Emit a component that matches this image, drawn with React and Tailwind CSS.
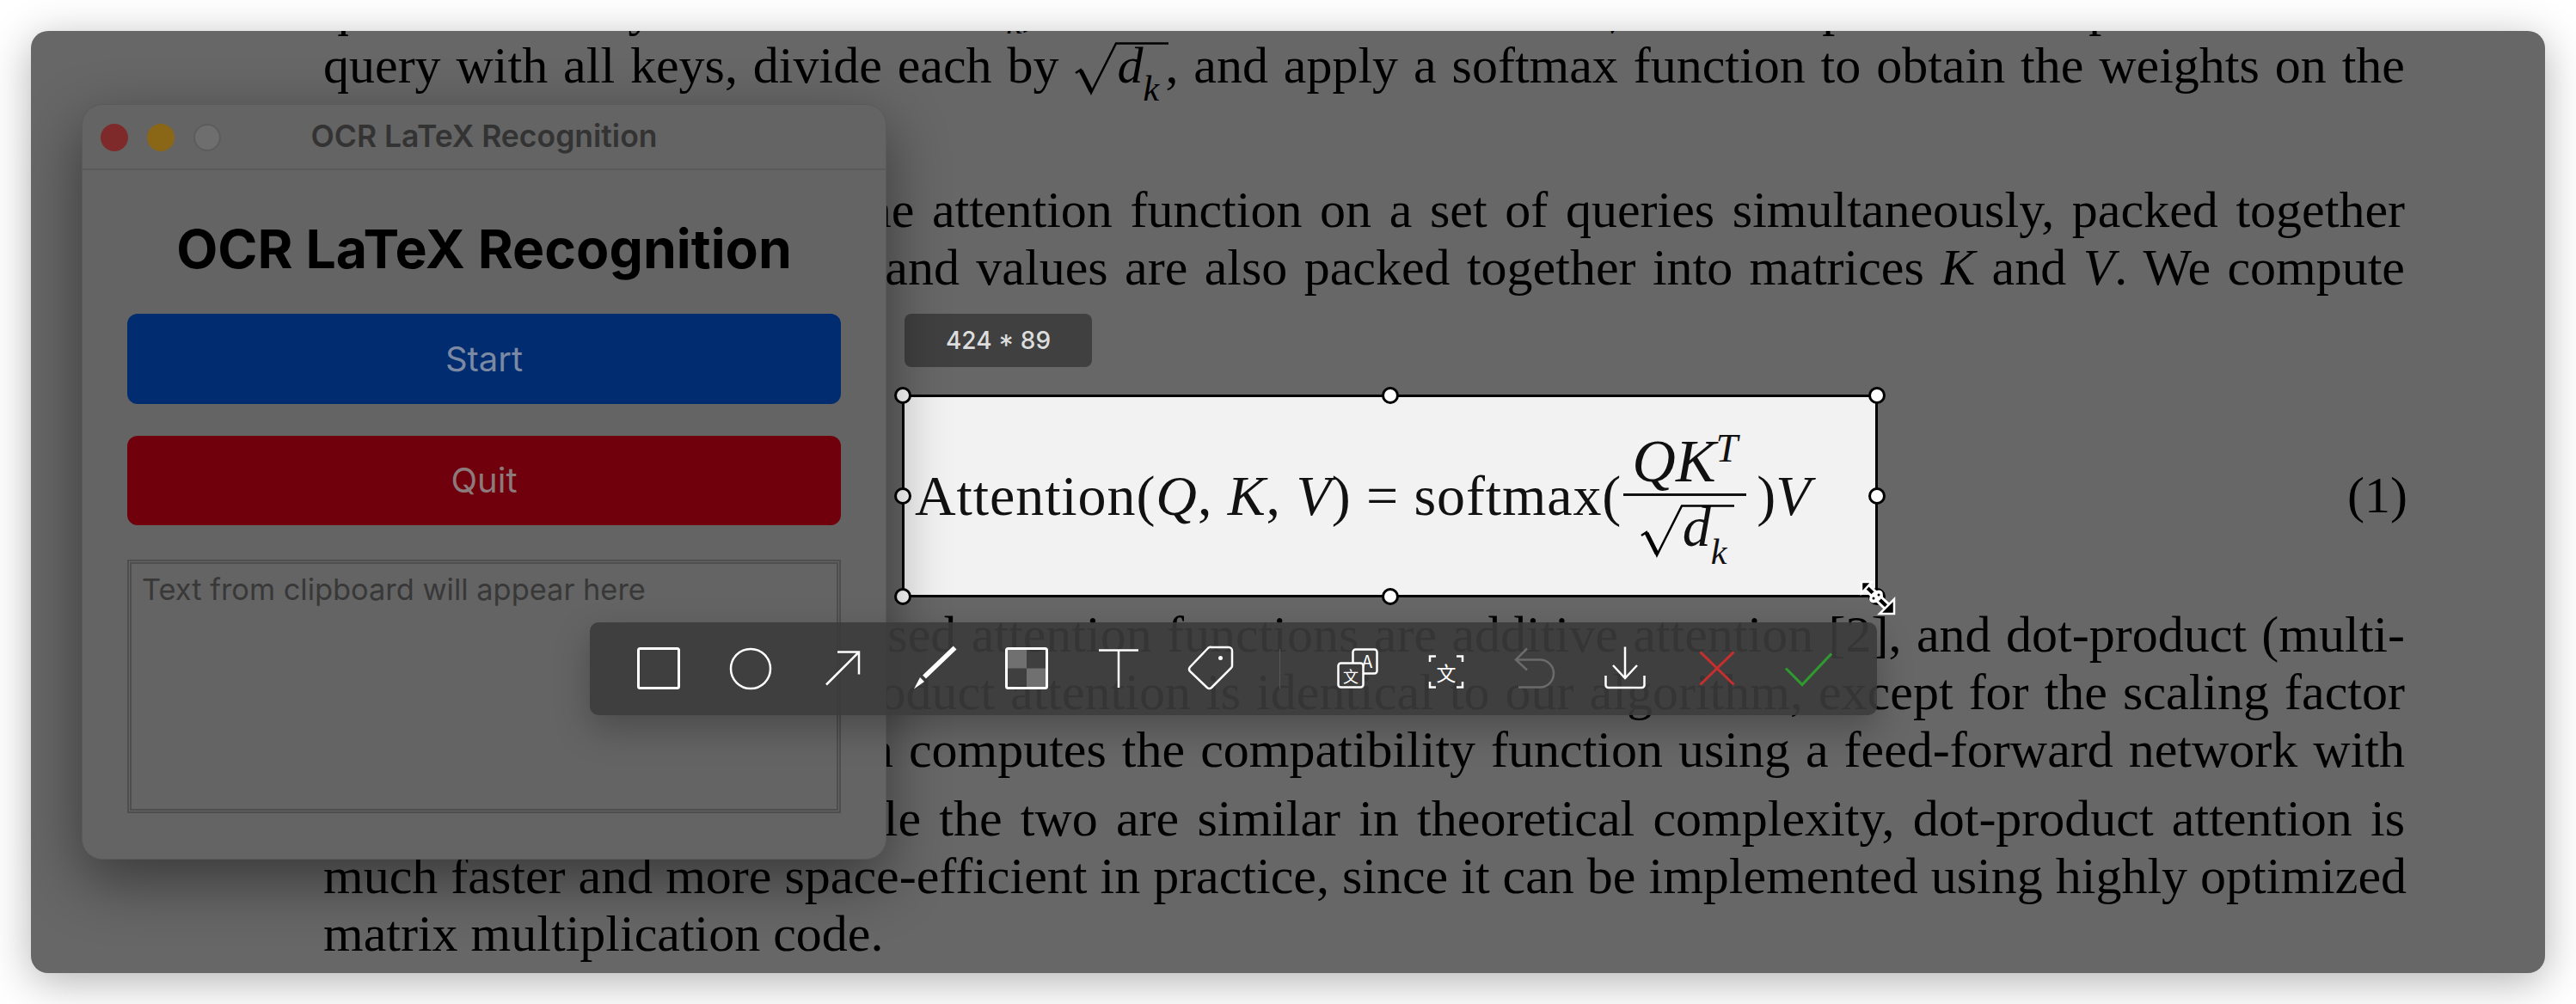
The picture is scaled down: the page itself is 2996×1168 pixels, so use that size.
import React from 'react';

const serif = "font-['Liberation_Serif',serif]";
const ui = "font-['Inter','Noto_Sans_CJK_SC',sans-serif]";

// radical sign drawn as svg, sits over a fixed width box so the line box stays put
function Sqrt({ className = 'top-[6px]' }) {
  return (
    <span className="relative inline-block w-[106px] pl-[50px] leading-[67px] italic whitespace-nowrap">
      <svg className={`absolute left-0 ${className}`} width="111" height="62" viewBox="0 0 111 62" fill="none" stroke="#000">
        <path d="M2 36 8 32 20 59 49 1.5H110" strokeWidth="2.5" />
        <path d="M8 33 20 57" strokeWidth="5" />
      </svg>
      d<sub className="text-[42px] leading-none align-[-10px]">k</sub>
    </span>
  );
}

function Line({ children, className = '', last = false }) {
  return (
    <div className={`h-[67px] leading-[67px] whitespace-nowrap ${last ? '' : 'text-justify [text-align-last:justify]'} ${className}`}>
      {children}
    </div>
  );
}

function Handle({ className }) {
  return <div className={`absolute w-[20px] h-[20px] rounded-full bg-white border-[3px] border-black ${className}`} />;
}

function Glyph({ x, y, size, children }) {
  return (
    <text x={x} y={y} fontSize={size} fill="#fff" stroke="none" textAnchor="middle" dominantBaseline="central" fontFamily="Noto Sans CJK SC, sans-serif">
      {children}
    </text>
  );
}

function Tool({ w, children }) {
  return (
    <div className={`flex items-center justify-center shrink-0 ${w}`}>
      <svg width="60" height="60" viewBox="0 0 60 60" fill="none" stroke="#fff" strokeWidth="2.5" className="overflow-visible">
        {children}
      </svg>
    </div>
  );
}

function Toolbar() {
  return (
    <div className="absolute left-[686px] top-[724px] w-[1497px] h-[108px] z-30 rounded-[10px] bg-[#3b3b3b]/90 flex items-center pl-[26px] shadow-[0_16px_40px_rgba(0,0,0,0.25)]">
      <Tool w="w-[107px]"><rect x="6.5" y="6.5" width="47" height="46" rx="2" strokeWidth="3" /></Tool>
      <Tool w="w-[107px]"><circle cx="30" cy="30" r="23" /></Tool>
      <Tool w="w-[107px]"><path d="M11 48.5 49 10.5M24 10.5H49V36.5" /></Tool>
      <Tool w="w-[107px]">
        <path d="M53.6 5.5 18 39.5" strokeWidth="5.5" />
        <path d="M6 53.5 13 40 18 45Z" fill="#fff" stroke="none" />
      </Tool>
      <Tool w="w-[107px]">
        <rect x="6.5" y="6.5" width="23.5" height="23" fill="#707070" stroke="none" />
        <rect x="30" y="29.5" width="23.5" height="23" fill="#707070" stroke="none" />
        <rect x="6.5" y="6.5" width="47" height="46" rx="2" strokeWidth="3" />
      </Tool>
      <Tool w="w-[107px]"><path d="M7 8.5H53M30 8.5V52" /></Tool>
      <Tool w="w-[107px]">
        <path d="M31 5H51a4 4 0 0 1 4 4V26a4 4 0 0 1-1 3L31 52a4 4 0 0 1-5 0L6 33a4 4 0 0 1 0-5L27 6a4 4 0 0 1 4-1Z" />
        <circle cx="41.5" cy="17.5" r="2.5" fill="#fff" stroke="none" />
      </Tool>
      <div className="w-px h-[46px] bg-[#575757] ml-[27px] mr-[37px] shrink-0" />
      <Tool w="w-[105px]">
        <rect x="24.5" y="7.5" width="28" height="28" rx="3" />
        <Glyph x="41" y="20" size="20">A</Glyph>
        <rect x="7.5" y="23.5" width="29" height="28" rx="3" fill="#3d3d3d" />
        <Glyph x="22" y="37.5" size="18">文</Glyph>
      </Tool>
      <Tool w="w-[102px]">
        <path d="M11 22V15.5H18M42 15.5H49V22M11 45V51.5H18M42 51.5H49V45" />
        <Glyph x="30" y="34" size="23">文</Glyph>
      </Tool>
      <Tool w="w-[103px]">
        <path d="M21 6.5 8 19.5 21 31.5M8 19.5H36a16 16 0 0 1 0 32H11" stroke="#6b6b6b" />
      </Tool>
      <Tool w="w-[108px]"><path d="M30 4.5V41M16 26 30 41 44 26M7.5 38V49a3 3 0 0 0 3 3H49.5a3 3 0 0 0 3-3V38" /></Tool>
      <Tool w="w-[106px]"><path d="M10.5 10.5 49.5 48.5M49.5 10.5 10.5 48.5" stroke="#c62f2d" strokeWidth="3" /></Tool>
      <Tool w="w-[106px]"><path d="M4 29.5 23 48.5 57 12.5" stroke="#2f9b2f" strokeWidth="3" /></Tool>
    </div>
  );
}

function Selection() {
  return (
    <div className={`absolute left-[1049px] top-[459px] w-[1135px] h-[236px] z-10 bg-[#f2f2f2] border-[3px] border-black text-[#111] ${serif}`}>
      <div className="flex items-center h-full pl-[12px] text-[66px] leading-none">
        <span className="tracking-[0.9px] whitespace-nowrap">Attention(<i>Q</i>, <i>K</i>, <i>V</i>) = softmax(</span>
        <span className="flex flex-col items-center w-[143px] ml-[2px] mr-[12px] shrink-0">
          <span className="border-b-[3px] border-[#111] w-full text-center pb-[2px] text-[70px]"><i>QK</i><sup className="text-[46px] italic">T</sup></span>
          <span className="pt-[2px]"><Sqrt className="top-[8px]" /></span>
        </span>
        <span>)<i>V</i></span>
      </div>
      <Handle className="-left-[12px] -top-[12px]" />
      <Handle className="left-1/2 -ml-[10px] -top-[12px]" />
      <Handle className="-right-[12px] -top-[12px]" />
      <Handle className="-left-[12px] top-1/2 -mt-[10px]" />
      <Handle className="-right-[12px] top-1/2 -mt-[10px]" />
      <Handle className="-left-[12px] -bottom-[12px]" />
      <Handle className="left-1/2 -ml-[10px] -bottom-[12px]" />
      <Handle className="-right-[12px] -bottom-[12px]" />
    </div>
  );
}

function OcrWindow() {
  return (
    <div className={`absolute left-[95px] top-[121px] w-[936px] h-[879px] z-20 rounded-[24px] bg-[#646464] border border-[#5a5a5a] shadow-[0_24px_70px_rgba(0,0,0,0.45)] flex flex-col ${ui}`}>
      <div className="relative h-[76px] shrink-0 border-b-2 border-[#5a5a5a] flex items-center justify-center">
        <div className="absolute left-[21px] top-[22px] flex gap-[22px]">
          <div className="w-[32px] h-[32px] rounded-full bg-[#7f2a2a]" />
          <div className="w-[32px] h-[32px] rounded-full bg-[#8a6716]" />
          <div className="w-[32px] h-[32px] rounded-full bg-[#6e6e6e] border-2 border-[#5c5c5c]" />
        </div>
        <span className="text-[35.5px] font-semibold text-[#333] whitespace-nowrap">OCR LaTeX Recognition</span>
      </div>
      <div className="flex flex-col px-[52px] pt-[51px]">
        <h1 className="text-[62.5px] leading-[80px] font-bold text-black text-center whitespace-nowrap">OCR LaTeX Recognition</h1>
        <button className="mt-[36px] h-[105px] rounded-[12px] bg-[#022c70] text-[#7c89a3] text-[40px]">Start</button>
        <button className="mt-[37px] h-[104px] rounded-[12px] bg-[#70000b] text-[#8c7a7c] text-[40px]">Quit</button>
        <div className="mt-[40px] h-[295px] border-[5px] border-double border-[#4e4e4e] px-[12px] py-[10px] text-[34.4px] leading-[40px] text-[#383838] whitespace-nowrap">
          Text from clipboard will appear here
        </div>
      </div>
    </div>
  );
}

export default function App() {
  return (
    <div className="relative w-[2996px] h-[1168px] bg-white overflow-hidden">
      <div className={`absolute left-[36px] top-[36px] w-[2924px] h-[1096px] rounded-[20px] overflow-hidden bg-[#676767] shadow-[0_10px_50px_rgba(0,0,0,0.3)] text-black text-[60px] ${serif}`}>
        <div className="w-[2421px] ml-[340px] -mt-[60px]">
          <Line>queries and keys of dimension <i>d<sub className="text-[40px]">k</sub></i>, and values of dimension <i>d<sub className="text-[40px]">v</sub></i>. We compute the dot products of the</Line>
          <Line>query with all keys, divide each by <Sqrt />, and apply a softmax function to obtain the weights on the</Line>
          <Line last>values.</Line>
          <Line className="mt-[34px]">In practice, we compute the attention function on a set of queries simultaneously, packed together</Line>
          <Line>into a matrix <i>Q</i>. The keys and values are also packed together into matrices <i>K</i> and <i>V</i>. We compute</Line>
          <Line last>the matrix of outputs as:</Line>
          <div className="mt-[131px] -mr-[3px] h-[67px] leading-[67px] text-right">(1)</div>
          <Line className="mt-[95px]">The two most commonly used attention functions are additive attention [2], and dot-product (multi-</Line>
          <Line>plicative) attention. Dot-product attention is identical to our algorithm, except for the scaling factor</Line>
          <Line>of 1/√<i>d<sub className="text-[40px]">k</sub></i>. Additive attention computes the compatibility function using a feed-forward network with</Line>
          <Line className="mt-[13px]">a single hidden layer. While the two are similar in theoretical complexity, dot-product attention is</Line>
          <Line>much faster and more space-efficient in practice, since it can be implemented using highly optimized</Line>
          <Line last>matrix multiplication code.</Line>
        </div>
      </div>

      <div className={`absolute left-[1052px] top-[365px] w-[218px] h-[62px] z-10 rounded-[8px] bg-[#404040] text-[#dddddd] text-[28px] font-medium flex items-center justify-center ${ui}`}>424 * 89</div>
      <Selection />
      <OcrWindow />
      <Toolbar />

      {/* resize cursor */}
      <svg className="absolute left-[2162px] top-[674px] z-40" width="44" height="42" viewBox="0 0 44 42">
        <path d="M10 10 34 33" stroke="#fff" strokeWidth="10" />
        <path d="M10 10 34 33" stroke="#000" strokeWidth="4" />
        <path d="M3 3H15L3 16Z" fill="#000" stroke="#fff" strokeWidth="2.5" />
        <path d="M41 40V23L24 40Z" fill="#000" stroke="#fff" strokeWidth="2.5" />
        <ellipse cx="20" cy="20" rx="9" ry="6" transform="rotate(-40 20 20)" fill="#fff" />
        <circle cx="17" cy="22" r="1.5" fill="#000" />
        <circle cx="23" cy="18" r="1.5" fill="#000" />
      </svg>
    </div>
  );
}
